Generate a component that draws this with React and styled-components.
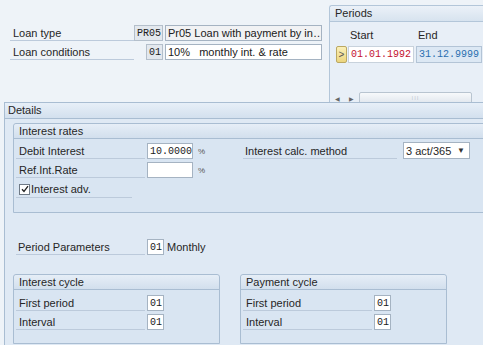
import React from 'react'
import styled, { createGlobalStyle } from 'styled-components'

const GlobalStyle = createGlobalStyle`
  html, body { margin:0; padding:0; }
  body {
    background:#eef3f8;
    font-family:"Liberation Sans", Arial, sans-serif;
    font-size:11px;
    color:#262626;
    overflow:hidden;
  }
`;

const Screen = styled.div`
  width:483px;
  height:345px;
  overflow:hidden;
  display:flex;
  flex-direction:column;
`;

const Top = styled.div`
  height:102px;
  display:flex;
  flex-shrink:0;
`;

const LoanBlock = styled.div`
  width:322px;
  padding:25px 0 0 10px;
  box-sizing:border-box;
  display:flex;
  flex-direction:column;
  gap:3px;
`;

const Row = styled.div`
  display:flex;
  align-items:flex-end;
  gap:${p=>p.$gap||0}px;
`;

const Label = styled.div`
  width:${p=>p.$w}px;
  height:16px;
  line-height:17px;
  padding-left:${p=>p.$indent??3}px;
  box-sizing:border-box;
  border-bottom:1px solid ${p=>p.$line||'#bccadb'};
  white-space:nowrap;
  flex-shrink:0;
`;

const KeySlot = styled.div`
  width:${p=>p.$w}px;
  display:flex;
  justify-content:flex-end;
  flex-shrink:0;
`;

const Field = styled.div`
  width:${p=>p.$w}px;
  height:16px;
  box-sizing:border-box;
  border:1px solid ${p=>p.$key?'#b4bfcb':'#a5b3c2'};
  background:${p=>p.$key?'#e3e8ee':p.$grey?'#f1f2f4':'#fff'};
  font-family:${p=>p.$sans?'"Liberation Sans", Arial, sans-serif':'"Liberation Mono", "Courier New", monospace'};
  font-size:${p=>p.$sans?'11px':'10px'};
  line-height:15px;
  padding:0 2px;
  white-space:nowrap;
  overflow:hidden;
  color:${p=>p.$color||'#202020'};
  flex-shrink:0;
`;

const Periods = styled.div`
  margin:5px 0 0 7px;
  flex:1;
  border:1px solid #b3c6d9;
  border-right:none;
  border-bottom:none;
  border-radius:3px 0 0 0;
  background:#e8eff7;
  display:flex;
  flex-direction:column;
`;

const PanelHead = styled.div`
  height:15px;
  line-height:15px;
  padding-left:5px;
  background:linear-gradient(#ebf1f8,#d7e3ef);
  border-bottom:1px solid #b3c6d9;
  border-radius:3px 0 0 0;
`;

const ColHeads = styled.div`
  display:flex;
  padding-left:20px;
  margin-top:6px;
  height:15px;
  line-height:15px;
  span:first-child { width:68px; }
`;

const DateRow = styled.div`
  display:flex;
  align-items:center;
  margin:3px 0 0 6px;
  gap:1px;
`;

const SelBtn = styled.div`
  width:11px;
  height:17px;
  box-sizing:border-box;
  border:1px solid #bba862;
  border-radius:2px;
  background:linear-gradient(#fbf0b8,#ecd57e);
  font-size:10px;
  line-height:15px;
  text-align:center;
  color:#555;
`;

const DateField = styled(Field)`
  height:17px;
  line-height:16px;
  background:${p=>p.$bg};
  border-color:${p=>p.$bd};
  margin-left:${p=>p.$ml||0}px;
`;

const ScrollRow = styled.div`
  margin-top:auto;
  height:14px;
  display:flex;
  align-items:center;
  margin-bottom:-3px;
`;

const Arrow = styled.span`
  width:${p=>p.$w}px;
  font-size:6px;
  color:#666;
  text-align:center;
`;

const Track = styled.div`
  width:113px;
  height:12px;
  box-sizing:border-box;
  border:1px solid #b8c4d0;
  border-radius:2px;
  background:linear-gradient(#f7f9fb,#e1e7ee);
  display:flex;
  justify-content:center;
  align-items:center;
  font-size:6px;
  letter-spacing:1px;
  color:#9aa7b5;
`;

const Details = styled.div`
  margin-left:4px;
  width:540px;
  flex:1;
  border-left:1px solid #a9bdd2;
  border-top:1px solid #a9bdd2;
  background:#dfe9f4;
`;

const DetailsHead = styled.div`
  height:15px;
  line-height:15px;
  padding-left:3px;
  background:linear-gradient(#e7eff8,#d3e0ee);
  border-bottom:1px solid #a9bdd2;
`;

const DetailsBody = styled.div`
  padding:4px 0 0 8px;
  display:flex;
  flex-direction:column;
`;

const Group = styled.div`
  width:${p=>p.$w?p.$w+'px':'auto'};
  box-sizing:border-box;
  border:1px solid #a9bdd2;
  border-radius:3px 3px 0 0;
  background:#d9e5f2;
`;

const GroupHead = styled.div`
  height:14px;
  line-height:14px;
  padding-left:5px;
  background:linear-gradient(#e6eef7,#d2dfed);
  border-bottom:1px solid #a9bdd2;
  border-radius:3px 3px 0 0;
`;

const GroupBody = styled.div`
  padding:${p=>p.$pad};
  display:flex;
  flex-direction:column;
  gap:3px;
`;

const Cell = styled.div`
  width:${p=>p.$w}px;
  display:flex;
  align-items:flex-end;
  gap:2px;
  flex-shrink:0;
`;

const Unit = styled.span`
  font-size:8px;
  color:#555;
  margin-left:3px;
  align-self:center;
`;

const Select = styled.div`
  margin-left:6px;
  width:67px;
  height:17px;
  box-sizing:border-box;
  border:1px solid #a5b3c2;
  background:#fff;
  display:flex;
  align-items:center;
  justify-content:space-between;
  padding:0 4px 0 2px;
  font-size:11px;
  span { font-size:8px; color:#333; }
`;

const CheckLabel = styled.label`
  width:113px;
  height:16px;
  display:flex;
  align-items:center;
  gap:1px;
  padding-left:3px;
  border-bottom:1px solid #bccadb;
`;

const Box = styled.span`
  width:9px;
  height:9px;
  border:1px solid #6f7a86;
  background:#fff;
  display:flex;
  align-items:center;
  justify-content:center;
  svg { display:block; }
`;

const ParamRow = styled(Row)`
  margin:26px 0 0 3px;
  align-items:center;
`;

const Text = styled.span`
  margin-left:1px;
`;

const Cycles = styled.div`
  display:flex;
  gap:20px;
  margin-top:19px;
`;

function CycleGroup({title}) {
  return (
    <Group $w={207}>
      <GroupHead>{title}</GroupHead>
      <GroupBody $pad="5px 0 13px 2px">
        <Row $gap={2}><Label $w={129}>First period</Label><Field $w={17}>01</Field></Row>
        <Row $gap={2}><Label $w={129}>Interval</Label><Field $w={17}>01</Field></Row>
      </GroupBody>
    </Group>
  )
}

export default function App() {
  return (
    <Screen>
      <GlobalStyle />
      <Top>
        <LoanBlock>
          <Row>
            <Label $w={124}>Loan type</Label>
            <KeySlot $w={29}><Field $w={29} $key>PR05</Field></KeySlot>
            <Field $w={157} $sans $grey style={{marginLeft:2}}>Pr05 Loan with payment by in…</Field>
          </Row>
          <Row>
            <Label $w={124}>Loan conditions</Label>
            <KeySlot $w={29}><Field $w={17} $key>01</Field></KeySlot>
            <Field $w={157} $sans style={{marginLeft:2}}>10%&nbsp;&nbsp;&nbsp;monthly int. &amp; rate</Field>
          </Row>
        </LoanBlock>
        <Periods>
          <PanelHead>Periods</PanelHead>
          <ColHeads><span>Start</span><span>End</span></ColHeads>
          <DateRow>
            <SelBtn>&gt;</SelBtn>
            <DateField $w={66} $bg="#fff" $bd="#c8d2dc" $color="#c41230">01.01.1992</DateField>
            <DateField $w={66} $bg="#dce8f4" $bd="#b3c4d6" $color="#2b6fb0" $ml={1}>31.12.9999</DateField>
          </DateRow>
          <ScrollRow>
            <Arrow $w={14}>◀</Arrow>
            <Arrow $w={15}>▶</Arrow>
            <Track>⁞⁞⁞</Track>
          </ScrollRow>
        </Periods>
      </Top>
      <Details>
        <DetailsHead>Details</DetailsHead>
        <DetailsBody>
          <Group>
            <GroupHead>Interest rates</GroupHead>
            <GroupBody $pad="3px 0 14px 2px">
              <Row>
                <Cell $w={227}>
                  <Label $w={129}>Debit Interest</Label>
                  <Field $w={46}>10.0000</Field>
                  <Unit>%</Unit>
                </Cell>
                <Label $w={154} $indent={2}>Interest calc. method</Label>
                <Select>3 act/365<span>▼</span></Select>
              </Row>
              <Row>
                <Cell $w={227}>
                  <Label $w={129}>Ref.Int.Rate</Label>
                  <Field $w={46}></Field>
                  <Unit>%</Unit>
                </Cell>
              </Row>
              <Row>
                <CheckLabel>
                  <Box>
                    <svg width="8" height="8" viewBox="0 0 8 8">
                      <path d="M1 4.2 L3 6.4 L7 1.2" fill="none" stroke="#222" strokeWidth="1.3" />
                    </svg>
                  </Box>
                  Interest adv.
                </CheckLabel>
              </Row>
            </GroupBody>
          </Group>
          <ParamRow $gap={2}>
            <Label $w={129} $indent={2}>Period Parameters</Label>
            <Field $w={17}>01</Field>
            <Text>Monthly</Text>
          </ParamRow>
          <Cycles>
            <CycleGroup title="Interest cycle" />
            <CycleGroup title="Payment cycle" />
          </Cycles>
        </DetailsBody>
      </Details>
    </Screen>
  )
}
